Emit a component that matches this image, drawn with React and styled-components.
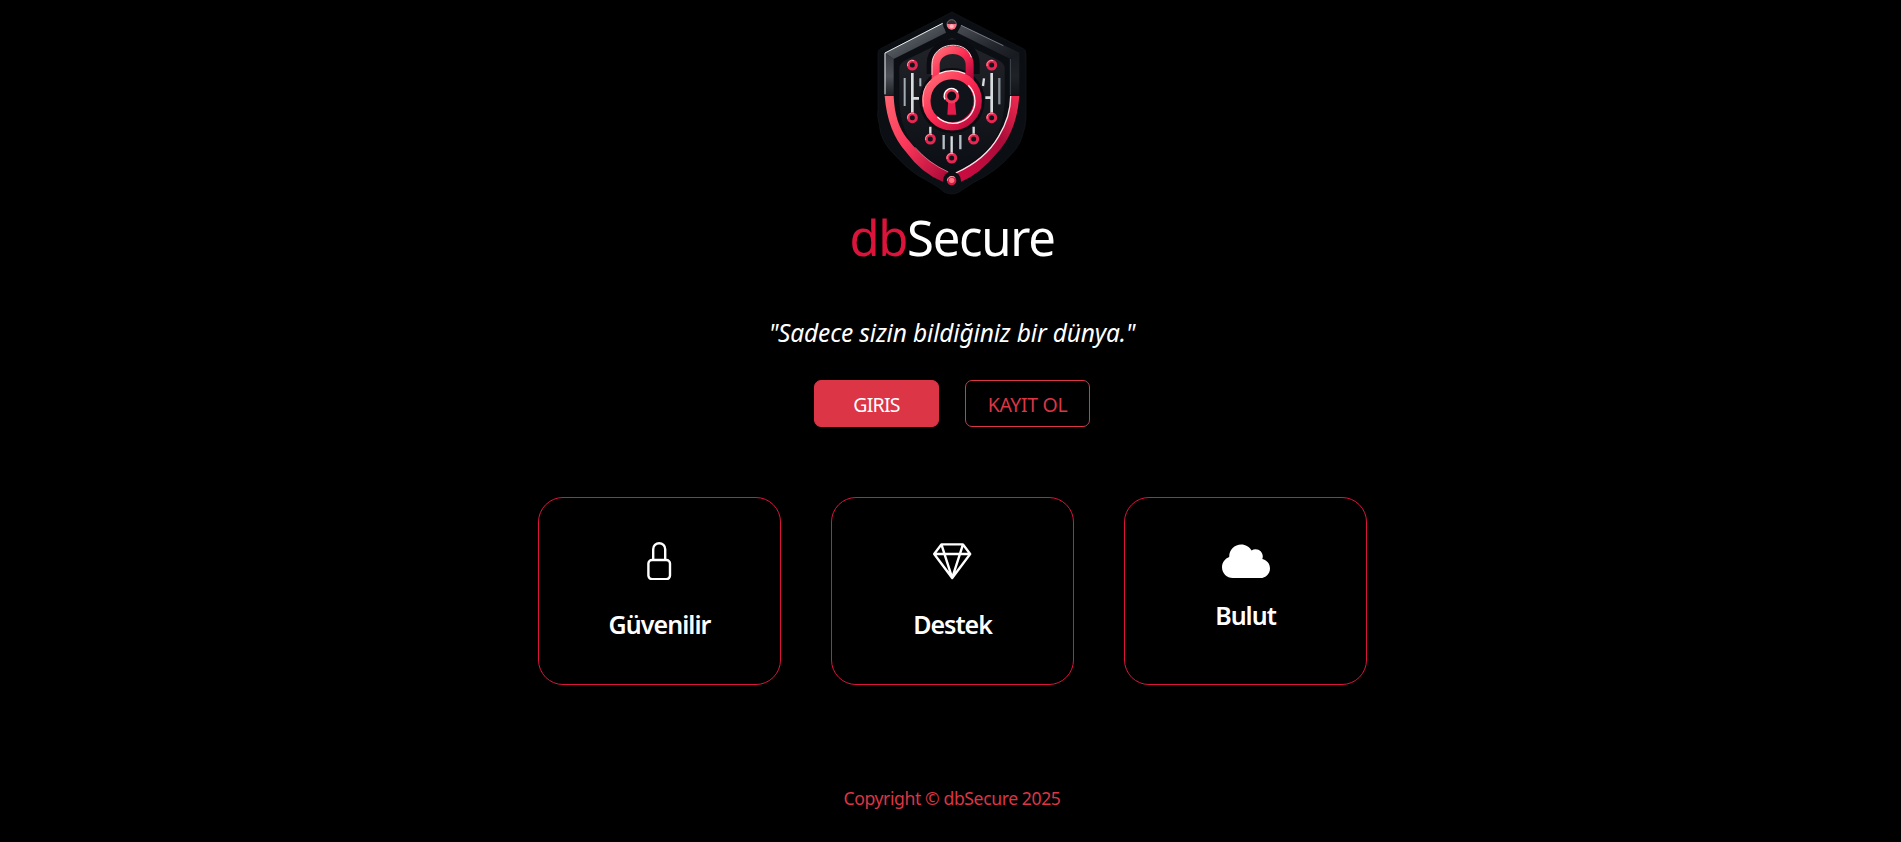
import React from 'react';
import styled, { createGlobalStyle } from 'styled-components';
import { BsLock, BsGem } from 'react-icons/bs';
import { FaCloud } from 'react-icons/fa';

const GlobalStyle = createGlobalStyle`
  * { box-sizing: border-box; }
  body {
    margin: 0;
    background: #000;
    color: #fff;
    font-family: 'Segoe UI', 'Noto Sans', 'Open Sans', sans-serif;
  }
`;

const Page = styled.main`
  display: flex;
  flex-direction: column;
  align-items: center;
  min-height: 100vh;
  padding: 10px 0 0 3px;
  white-space: nowrap;
`;

const Logo = styled.svg`
  display: block;
  width: 152px;
  height: 186px;
`;

const Title = styled.h1`
  margin: 6px 0 0;
  font-size: 49px;
  font-weight: 400;
  line-height: 70px;
  letter-spacing: -1.3px;
`;

const Accent = styled.span`
  color: #dc143c;
`;

const Tagline = styled.p`
  margin: 41px 0 0;
  font-size: 24.5px;
  font-style: italic;
  line-height: 40px;
  letter-spacing: -0.17px;
`;

const Actions = styled.div`
  display: flex;
  gap: 26px;
  margin-top: 27px;
`;

const Button = styled.button`
  width: 125px;
  height: 47px;
  padding: 2px 0 0;
  border: 1px solid #dc3545;
  border-radius: 7px;
  background: ${({ $filled }) => ($filled ? '#dc3545' : 'transparent')};
  color: ${({ $filled }) => ($filled ? '#fff' : '#dc3545')};
  font-family: inherit;
  font-size: 19.5px;
  line-height: 26px;
  letter-spacing: ${({ $spacing }) => $spacing};
`;

const Cards = styled.section`
  display: flex;
  gap: 50px;
  margin: 70px 0 0 1px;
`;

const Card = styled.article`
  display: flex;
  flex-direction: column;
  align-items: center;
  gap: ${({ $gap }) => $gap};
  width: 243px;
  height: 188px;
  padding-top: 44px;
  border: 1px solid #dc143c;
  border-radius: 25px;

  svg {
    display: block;
    width: ${({ $iconWidth = '38.4px' }) => $iconWidth};
    height: 38.4px;
  }
`;

const CardTitle = styled.h2`
  margin: 0;
  font-size: 25px;
  font-weight: 600;
  line-height: 34px;
  letter-spacing: ${({ $spacing }) => $spacing};
`;

const Footer = styled.footer`
  margin-top: 99px;
  color: #dc3545;
  font-size: 17.6px;
  line-height: 28px;
  letter-spacing: -0.4px;
`;

const nodes = [
  [157, 195], [395, 195], [157, 353], [395, 353], [211, 417], [341, 417], [275, 474],
];

function ShieldLogo() {
  return (
    <Logo viewBox="48 30 456 558" role="img" aria-label="dbSecure">
      <defs>
        <linearGradient id="steelLeft" x1="0" y1="0" x2="1" y2="1">
          <stop offset="0" stopColor="#3a3f45" />
          <stop offset=".45" stopColor="#50555b" />
          <stop offset="1" stopColor="#202329" />
        </linearGradient>
        <linearGradient id="steelRight" x1="0" y1="0" x2="1" y2="1">
          <stop offset="0" stopColor="#4b4f55" />
          <stop offset=".6" stopColor="#23272d" />
          <stop offset="1" stopColor="#15181d" />
        </linearGradient>
        <linearGradient id="steelSide" x1="0" y1="0" x2="0" y2="1">
          <stop offset="0" stopColor="#34383e" />
          <stop offset=".55" stopColor="#4d5157" />
          <stop offset="1" stopColor="#1d2025" />
        </linearGradient>
        <linearGradient id="panel" x1="0" y1="0" x2="0" y2="1">
          <stop offset="0" stopColor="#222429" />
          <stop offset="1" stopColor="#0b0e14" />
        </linearGradient>
        <linearGradient id="bandLeft" x1="0" y1="0" x2="1" y2="1">
          <stop offset="0" stopColor="#ff6470" />
          <stop offset=".45" stopColor="#fb375a" />
          <stop offset="1" stopColor="#a60536" />
        </linearGradient>
        <linearGradient id="bandRight" x1="1" y1="0" x2="0" y2="1">
          <stop offset="0" stopColor="#f02b50" />
          <stop offset=".4" stopColor="#aa0c39" />
          <stop offset="1" stopColor="#d00b43" />
        </linearGradient>
        <linearGradient id="lock" x1="0" y1="0" x2="1" y2="1">
          <stop offset="0" stopColor="#ff6d76" />
          <stop offset=".5" stopColor="#fb2a52" />
          <stop offset="1" stopColor="#b40639" />
        </linearGradient>
      </defs>

      <path d="M276 36 490 146Q498 150 498 160V330Q500 370 490 397Q482 435 455 462Q410 515 340 548Q310 567 298 576Q276 588 252 576Q240 564 200 541Q155 520 112 473Q60 425 58 375Q50 350 54 325V158Q54 150 62 146Z" fill="#0b0e13" stroke="#25292f" strokeWidth="1" />

      <path d="M74 158 248 68 258 98 101 177Z" fill="url(#steelLeft)" />
      <path d="M302 74 478 158 451 177 292 98Z" fill="url(#steelRight)" />
      <path d="M74 158 101 177V287H74Z" fill="url(#steelSide)" />
      <path d="M478 158 451 177V287H478Z" fill="url(#steelSide)" opacity=".3" />
      <path d="M451 177V285" fill="none" stroke="#596169" strokeWidth="2" />
      <path d="M75 283V159L248 70" fill="none" stroke="#e8edef" strokeWidth="3" />
      <path d="M303 76 430 137" fill="none" stroke="#939ba0" strokeWidth="2" />
      <path d="M276 113 414 180Q434 190 434 205V300Q430 400 380 448Q330 496 276 513Q216 494 168 443Q120 390 118 300V205Q118 190 138 180Z" fill="url(#panel)" />

      <path d="M74 288H101Q104 368 140 414Q190 481 265 516Q253 526 250 546Q184 519 140 458Q83 397 74 288Z" fill="url(#bandLeft)" />
      <path d="M451 288H478Q470 394 414 456Q360 522 302 546Q300 529 287 519Q376 474 414 410Q451 356 451 288Z" fill="url(#bandRight)" />
      <path d="M287 519Q376 479 416 409Q452 350 452 288" fill="none" stroke="#f7dfe5" strokeWidth="4" />
      <path d="M165 442Q205 489 265 516" fill="none" stroke="#ed9fae" strokeWidth="2" />

      <path d="M217 222V191C217 117 342 117 342 191V222" fill="none" stroke="#0a0c11" strokeWidth="34" />
      <circle cx="276" cy="302" r="98" fill="#0a0c11" />
      <path d="M227 242V195C227 135 329 135 329 195V242" fill="none" stroke="url(#lock)" strokeWidth="24" />
      <path d="M216 225V193C216 126 318 116 334 172" fill="none" stroke="#ffd5d9" strokeWidth="3" />
      <circle cx="276" cy="302" r="77" fill="#10131a" stroke="url(#lock)" strokeWidth="25" />
      <path d="M237 221Q276 203 316 221" fill="none" stroke="#ffe7e9" strokeWidth="4" />
      <path d="M190 320Q183 265 211 243" fill="none" stroke="#ffabb4" strokeWidth="3" />
      <path d="M232 351A66 66 0 0 0 325 256" fill="none" stroke="#fff0f3" strokeWidth="4" />

      <path d="M265 298H284L289 344H262Z" fill="#e51b4b" />
      <circle cx="275" cy="288" r="18" fill="#0d1016" stroke="#f53a5c" strokeWidth="9" />
      <path d="M255 298A22 22 0 1 1 294 277" fill="none" stroke="#fff" strokeWidth="4" />

      <g fill="none" stroke="#d8dddf" strokeWidth="8">
        <path d="M157 219V338M157 295H177M395 219V338M376 293H395" />
        <path d="M275 409V460M211 380V402M341 380V402" strokeWidth="7" />
        <path d="M251 405V448M301 405V448" stroke="#b6bfc6" strokeWidth="7" />
        <path d="M134 234V318M181 235V259" stroke="#a3adb5" strokeWidth="6" />
        <path d="M418 234V313" stroke="#858d94" strokeWidth="7" />
        <path d="M372 235 369 258" strokeWidth="7" />
      </g>
      {nodes.map(([x, y]) => (
        <g key={`${x}-${y}`} fill="none">
          <circle cx={x} cy={y} r="12" fill="#11131a" stroke="#e72651" strokeWidth="9" />
          <path d={`M${x - 14} ${y + 3}A14 14 0 0 1 ${x + 5} ${y - 13}`} stroke="#ff9ca7" strokeWidth="3" />
        </g>
      ))}

      <circle cx="276" cy="72" r="27" fill="#0b0e13" />
      <circle cx="275" cy="73" r="14" fill="#33262d" stroke="#8f9396" strokeWidth="2" />
      <path d="M261 72H289V75A14 14 0 0 1 261 75Z" fill="#ff7184" />
      <circle cx="275" cy="79" r="6" fill="#ffb7be" />
      <circle cx="276" cy="542" r="27" fill="#0b0e13" />
      <circle cx="275" cy="542" r="14" fill="#d71746" />
      <circle cx="275" cy="541" r="8" fill="#ff737d" />
      <path d="M262 542A14 14 0 0 1 284 532" fill="none" stroke="#f6bac1" strokeWidth="3" />
    </Logo>
  );
}

export default function App() {
  return (
    <>
      <GlobalStyle />
      <Page>
        <ShieldLogo />
        <Title><Accent>db</Accent>Secure</Title>
        <Tagline>"Sadece sizin bildiğiniz bir dünya."</Tagline>
        <Actions>
          <Button $filled $spacing="-0.8px">GIRIS</Button>
          <Button $spacing="-0.35px">KAYIT OL</Button>
        </Actions>
        <Cards>
          <Card $gap="27px">
            <BsLock />
            <CardTitle $spacing="-0.95px">Güvenilir</CardTitle>
          </Card>
          <Card $gap="27px">
            <BsGem />
            <CardTitle $spacing="-1px">Destek</CardTitle>
          </Card>
          <Card $gap="18px" $iconWidth="48px">
            <FaCloud />
            <CardTitle $spacing="-1px">Bulut</CardTitle>
          </Card>
        </Cards>
        <Footer>Copyright © dbSecure 2025</Footer>
      </Page>
    </>
  );
}
